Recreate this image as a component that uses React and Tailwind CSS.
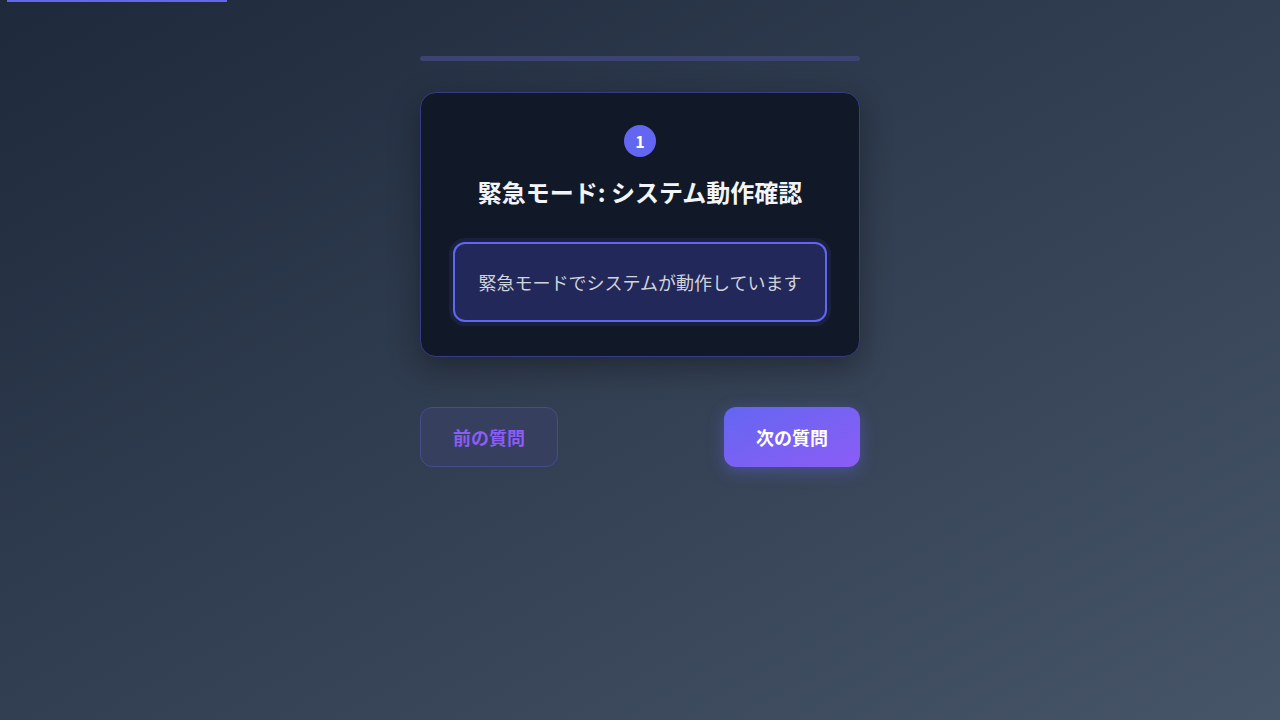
export default function App() {
  return (
    <div
      className="relative min-h-[720px] w-full bg-gradient-to-br from-[#1e293b] to-[#475569]"
      style={{ fontFamily: '"Noto Sans CJK JP", "Noto Sans", sans-serif' }}
    >
      <div className="absolute left-[7px] top-0 h-[2px] w-[220px] bg-[#6366f1]" />
      <div className="mx-auto flex w-[440px] flex-col pt-[56px]">
        <div className="h-[5px] w-full rounded-full bg-[#3b4472]" />
        <div className="mt-[31px] flex flex-col items-center rounded-2xl border border-[#363c86] bg-[#111827] px-8 pb-[34px] pt-8 shadow-[0_10px_30px_rgba(0,0,0,0.35)]">
          <div className="flex h-8 w-8 items-center justify-center rounded-full bg-[#6366f1] text-[16px] font-semibold text-white">
            1
          </div>
          <h2 className="mt-[17px] text-[24px] font-bold leading-[36px] text-[#f1f5f9]">
            緊急モード: システム動作確認
          </h2>
          <div className="mt-[32px] flex h-[80px] w-full items-center justify-center rounded-xl border-2 border-[#6366f1] bg-[#23285a] text-[18px] text-[#d1d5db] shadow-[0_0_0_4px_rgba(99,102,241,0.12)]">
            緊急モードでシステムが動作しています
          </div>
        </div>
        <div className="mt-[50px] flex items-center justify-between">
          <button className="flex h-[60px] w-[138px] items-center justify-center rounded-xl border border-[#464c8c] bg-[#373f5f] text-[18px] font-bold text-[#8b5cf6]">
            前の質問
          </button>
          <button className="flex h-[60px] w-[136px] items-center justify-center rounded-xl bg-gradient-to-br from-[#6366f1] to-[#8b5cf6] text-[18px] font-bold text-white shadow-[0_4px_16px_rgba(99,102,241,0.4)]">
            次の質問
          </button>
        </div>
      </div>
    </div>
  );
}
